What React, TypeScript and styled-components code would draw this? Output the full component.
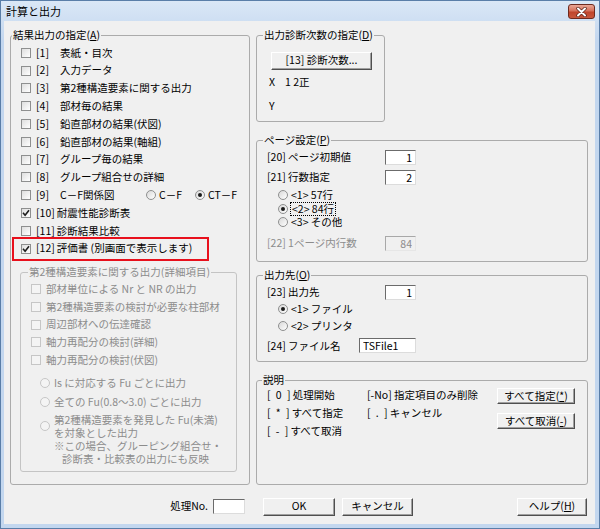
import React from "react";
import styled, { createGlobalStyle } from "styled-components";

const GlobalStyle = createGlobalStyle`
  html, body {
    margin: 0;
    padding: 0;
    background: #fff;
  }
  body {
    font-family: "Noto Sans CJK JP", "Liberation Sans", sans-serif;
    font-size: 10.5px;
    line-height: 1.2;
    color: #000;
  }
`;

const Window = styled.div`
  width: 600px;
  height: 529px;
  box-sizing: border-box;
  border: 1px solid #5a7ea8;
  background: linear-gradient(#dae7f6, #c3d7ef 40px, #c3d7ef);
  padding: 0 4px 4px 3px;
  display: flex;
  flex-direction: column;
`;

const TitleBar = styled.div`
  height: 20px;
  display: flex;
  align-items: flex-start;
  justify-content: space-between;
  flex: none;
`;

const Title = styled.span`
  font-size: 11px;
  line-height: 20px;
  padding-left: 2px;
`;

const CloseButton = styled.div`
  width: 27px;
  height: 15px;
  margin-top: 3px;
  box-sizing: border-box;
  border: 1px solid #6e2a1e;
  border-radius: 3px;
  background: linear-gradient(#eaa796, #d5705a 45%, #c0452c 55%, #c9573c);
  display: flex;
  align-items: center;
  justify-content: center;
`;

const Client = styled.div`
  flex: 1;
  background: #f0f0f0;
  padding: 8px 7px 0 6px;
  display: flex;
  flex-direction: column;
`;

const Main = styled.div`
  display: flex;
  gap: 6px;
`;

const RightColumn = styled.div`
  width: 332px;
  display: flex;
  flex-direction: column;
`;

const Group = styled.fieldset<{ $h: number; $w?: number; $mt?: number; $ml?: number; $dim?: boolean }>`
  margin: ${p => p.$mt ?? 0}px 0 0 ${p => p.$ml ?? 0}px;
  padding: 0;
  min-width: 0;
  height: ${p => p.$h}px;
  width: ${p => (p.$w ? `${p.$w}px` : "auto")};
  box-sizing: border-box;
  border: 1px solid ${p => (p.$dim ? "#c4c4c4" : "#ababab")};
  border-radius: 3px;
  flex: none;
`;

const Legend = styled.legend<{ $lx?: number; $dim?: boolean }>`
  margin-left: ${p => p.$lx ?? 6}px;
  padding: 0 1px;
  line-height: 12px;
  color: ${p => (p.$dim ? "#8c8c8c" : "#000")};
`;

const Row = styled.div<{ $h?: number; $pl?: number; $mt?: number; $dim?: boolean }>`
  display: flex;
  align-items: center;
  height: ${p => p.$h ?? 17.8}px;
  padding-left: ${p => p.$pl ?? 10}px;
  margin-top: ${p => p.$mt ?? 0}px;
  white-space: nowrap;
  color: ${p => (p.$dim ? "#8c8c8c" : "#000")};
`;

const Highlight = styled.div`
  display: flex;
  align-items: center;
  width: 197px;
  height: 24px;
  box-sizing: border-box;
  margin: -3px 0 -3px 1px;
  padding-left: 7px;
  border: 2px solid #e8101c;
  white-space: nowrap;
`;

const Box = styled.span<{ $dim?: boolean }>`
  display: inline-flex;
  align-items: center;
  justify-content: center;
  width: 10px;
  height: 10px;
  box-sizing: border-box;
  flex: none;
  margin-right: 5px;
  border: 1px solid ${p => (p.$dim ? "#c6c6c6" : "#8e8f8f")};
  background: ${p => (p.$dim ? "#f4f4f4" : "linear-gradient(135deg, #dedede, #fff)")};
`;

const Dot = styled.span<{ $on?: boolean; $dim?: boolean; $mr?: number }>`
  display: inline-flex;
  align-items: center;
  justify-content: center;
  width: 10px;
  height: 10px;
  box-sizing: border-box;
  flex: none;
  border-radius: 50%;
  margin-right: ${p => p.$mr ?? 3}px;
  border: 1px solid ${p => (p.$dim ? "#c6c6c6" : "#8e8f8f")};
  background: ${p => (p.$dim ? "#f4f4f4" : "linear-gradient(135deg, #d8d8d8, #fff)")};
  &::after {
    content: "";
    display: ${p => (p.$on ? "block" : "none")};
    width: 4px;
    height: 4px;
    border-radius: 50%;
    background: #1b1b1b;
  }
`;

const Num = styled.span<{ $w?: number }>`
  display: inline-block;
  width: ${p => (p.$w ? `${p.$w}px` : "auto")};
  margin-right: ${p => (p.$w ? 0 : 2)}px;
  flex: none;
`;

const Label = styled.span<{ $w?: number }>`
  display: inline-block;
  width: ${p => (p.$w ? `${p.$w}px` : "auto")};
  flex: none;
`;

const Focus = styled.span`
  outline: 1px dotted #000;
  outline-offset: 0;
  padding: 0 1px;
`;

const RadioBlock = styled.div<{ $mt?: number; $h?: number }>`
  display: flex;
  align-items: center;
  padding-left: 19px;
  height: ${p => (p.$h ? `${p.$h}px` : "auto")};
  margin-top: ${p => p.$mt ?? 0}px;
  color: #8c8c8c;
  line-height: 13px;
  white-space: nowrap;
`;

const Note = styled.div`
  padding-left: 33px;
  color: #8c8c8c;
  line-height: 13px;
  white-space: nowrap;
`;

const NoteIndent = styled.div`
  padding-left: 8px;
`;

const Field = styled.input<{ $w: number; $left?: boolean }>`
  width: ${p => p.$w}px;
  height: 15px;
  box-sizing: border-box;
  margin: 0;
  padding: 0 3px;
  font: inherit;
  color: #000;
  text-align: ${p => (p.$left ? "left" : "right")};
  border: 1px solid;
  border-color: #6b6b6b #dcdcdc #dcdcdc #6b6b6b;
  background: #fff;
  outline: none;
  flex: none;
  &:disabled {
    background: #f0f0f0;
    color: #8c8c8c;
    border-color: #a8a8a8 #e6e6e6 #e6e6e6 #a8a8a8;
  }
`;

const Button = styled.button<{ $w: number; $h?: number; $ml?: number; $mt?: number }>`
  width: ${p => p.$w}px;
  height: ${p => p.$h ?? 18}px;
  margin: ${p => p.$mt ?? 0}px 0 0 ${p => p.$ml ?? 0}px;
  padding: 0;
  box-sizing: border-box;
  font: inherit;
  color: #000;
  background: #f0f0f0;
  border: 1px solid;
  border-color: #fff #4f4f4f #4f4f4f #fff;
  box-shadow: inset -1px -1px 0 #a0a0a0;
  flex: none;
  white-space: nowrap;
`;

const Explain = styled.div`
  display: flex;
  padding-left: 10px;
`;

const ExplainGrid = styled.div`
  display: grid;
  grid-template-columns: 100px 130px;
  grid-auto-rows: 18px;
  align-items: center;
  white-space: pre;
`;

const ExplainButtons = styled.div`
  display: flex;
  flex-direction: column;
  gap: 9px;
  padding-top: 2px;
`;

const BottomBar = styled.div`
  display: flex;
  align-items: center;
  height: 19px;
  margin-top: 12px;
`;

const BottomLabel = styled.span`
  width: 198px;
  text-align: right;
  flex: none;
`;

const Check = () => (
  <svg width="8" height="8" viewBox="0 0 8 8">
    <path d="M1 3.8 L3.1 6.2 L7 1.2" fill="none" stroke="#1e1e1e" strokeWidth="1.6" />
  </svg>
);

const items = [
  { n: "[1]", t: "表紙・目次" },
  { n: "[2]", t: "入力データ" },
  { n: "[3]", t: "第2種構造要素に関する出力" },
  { n: "[4]", t: "部材毎の結果" },
  { n: "[5]", t: "鉛直部材の結果(伏図)" },
  { n: "[6]", t: "鉛直部材の結果(軸組)" },
  { n: "[7]", t: "グループ毎の結果" },
  { n: "[8]", t: "グループ組合せの詳細" },
];

const detailItems = [
  "部材単位による Nr と NR の出力",
  "第2種構造要素の検討が必要な柱部材",
  "周辺部材への伝達確認",
  "軸力再配分の検討(詳細)",
  "軸力再配分の検討(伏図)",
];

export default function App() {
  return (
    <>
      <GlobalStyle />
      <Window>
        <TitleBar>
          <Title>計算と出力</Title>
          <CloseButton>
            <svg width="13" height="10" viewBox="0 0 13 10">
              <path d="M3 1.5 L10 8.5 M10 1.5 L3 8.5" stroke="#5a2016" strokeWidth="3.4" strokeLinecap="round" />
              <path d="M3 1.5 L10 8.5 M10 1.5 L3 8.5" stroke="#fff" strokeWidth="2" strokeLinecap="round" />
            </svg>
          </CloseButton>
        </TitleBar>
        <Client>
          <Main>
            <Group $h={456} $w={240}>
              <Legend $lx={1}>結果出力の指定(<u>A</u>)</Legend>
              <div style={{ height: 3 }} />
              {items.map(it => (
                <Row key={it.n}>
                  <Box />
                  <Num $w={24}>{it.n}</Num>
                  <span>{it.t}</span>
                </Row>
              ))}
              <Row>
                <Box />
                <Num $w={24}>[9]</Num>
                <Label $w={86}>C－F関係図</Label>
                <Dot />
                <Label $w={36}>C－F</Label>
                <Dot $on />
                <span>CT－F</span>
              </Row>
              <Row>
                <Box><Check /></Box>
                <Num>[10]</Num>
                <span>耐震性能診断表</span>
              </Row>
              <Row>
                <Box />
                <Num>[11]</Num>
                <span>診断結果比較</span>
              </Row>
              <Highlight>
                <Box><Check /></Box>
                <Num>[12]</Num>
                <span>評価書 (別画面で表示します)</span>
              </Highlight>
              <Group $h={206} $w={217} $ml={9} $mt={8.4} $dim>
                <Legend $lx={7} $dim>第2種構造要素に関する出力(詳細項目)</Legend>
                <div style={{ height: 2 }} />
                {detailItems.map(t => (
                  <Row key={t} $dim>
                    <Box $dim />
                    <span>{t}</span>
                  </Row>
                ))}
                <RadioBlock $mt={4} $h={19}>
                  <Dot $dim $mr={4} />
                  <span>Is に対応する Fu ごとに出力</span>
                </RadioBlock>
                <RadioBlock $h={19}>
                  <Dot $dim $mr={4} />
                  <span>全ての Fu(0.8～3.0) ごとに出力</span>
                </RadioBlock>
                <RadioBlock $mt={2}>
                  <Dot $dim $mr={4} />
                  <div>
                    <div>第2種構造要素を発見した Fu(未満)</div>
                    <div>を対象とした出力</div>
                  </div>
                </RadioBlock>
                <Note>
                  <div>※この場合、グルーピング組合せ・</div>
                  <NoteIndent>診断表・比較表の出力にも反映</NoteIndent>
                </Note>
              </Group>
            </Group>

            <RightColumn>
              <Group $h={93} $w={129}>
                <Legend $lx={6}>出力診断次数の指定(<u>D</u>)</Legend>
                <Button $w={101} $ml={14} $mt={10.7}>[13] 診断次数...</Button>
                <Row $h={16} $pl={12} $mt={5}>
                  <Label $w={16}>X</Label>
                  <span>1 2正</span>
                </Row>
                <Row $h={16} $pl={12} $mt={8}>Y</Row>
              </Group>

              <Group $h={128} $mt={12}>
                <Legend $lx={6}>ページ設定(<u>P</u>)</Legend>
                <Row $h={16} $mt={3}>
                  <Label $w={118}>[20] ページ初期値</Label>
                  <Field $w={31} readOnly value="1" />
                </Row>
                <Row $h={16} $mt={4.3}>
                  <Label $w={118}>[21] 行数指定</Label>
                  <Field $w={31} readOnly value="2" />
                </Row>
                <Row $h={13.5} $pl={21} $mt={3.3}>
                  <Dot />
                  <span>&lt;1&gt; 57行</span>
                </Row>
                <Row $h={13.5} $pl={21}>
                  <Dot $on />
                  <Focus>&lt;2&gt; 84行</Focus>
                </Row>
                <Row $h={13.5} $pl={21}>
                  <Dot />
                  <span>&lt;3&gt; その他</span>
                </Row>
                <Row $h={16} $mt={6.5} $dim>
                  <Label $w={118}>[22] 1ページ内行数</Label>
                  <Field $w={31} disabled value="84" />
                </Row>
              </Group>

              <Group $h={93} $mt={7}>
                <Legend $lx={6}>出力先(<u>O</u>)</Legend>
                <Row $h={16} $mt={3.3}>
                  <Label $w={118}>[23] 出力先</Label>
                  <Field $w={31} readOnly value="1" />
                </Row>
                <Row $h={17} $pl={21} $mt={0.5}>
                  <Dot $on />
                  <span>&lt;1&gt; ファイル</span>
                </Row>
                <Row $h={17} $pl={21}>
                  <Dot />
                  <span>&lt;2&gt; プリンタ</span>
                </Row>
                <Row $h={16} $mt={3.2}>
                  <Label $w={92}>[24] ファイル名</Label>
                  <Field $w={57} $left readOnly value="TSFile1" />
                </Row>
              </Group>

              <Group $h={111} $mt={12}>
                <Legend $lx={5}>説明</Legend>
                <Explain>
                  <ExplainGrid>
                    <span>{"[\u20020\u2002] 処理開始"}</span>
                    <span>[-No] 指定項目のみ削除</span>
                    <span>{"[\u2002*\u2002] すべて指定"}</span>
                    <span>{"[\u2002.\u2002] キャンセル"}</span>
                    <span>{"[\u2002-\u2002] すべて取消"}</span>
                  </ExplainGrid>
                  <ExplainButtons>
                    <Button $w={78} $h={16}>すべて指定(<u>*</u>)</Button>
                    <Button $w={78} $h={16}>すべて取消(<u>-</u>)</Button>
                  </ExplainButtons>
                </Explain>
              </Group>
            </RightColumn>
          </Main>

          <BottomBar>
            <BottomLabel>処理No.</BottomLabel>
            <Field $w={32} $left readOnly value="" style={{ marginLeft: 5 }} />
            <Button $w={72} $ml={18}>OK</Button>
            <Button $w={71} $ml={7}>キャンセル</Button>
            <Button $w={70} style={{ marginLeft: "auto", marginRight: 1 }}>ヘルプ(<u>H</u>)</Button>
          </BottomBar>
        </Client>
      </Window>
    </>
  );
}
